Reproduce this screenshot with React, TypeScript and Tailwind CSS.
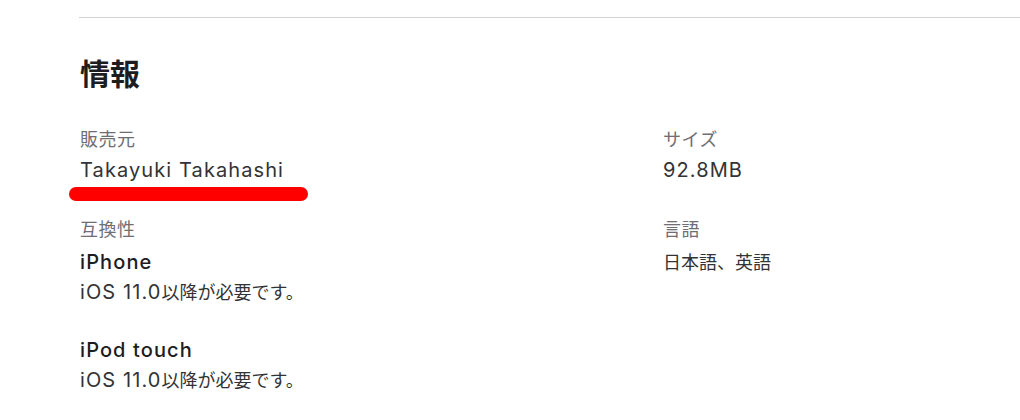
import type { ReactNode } from 'react';

const FONT = 'font-["Inter","Noto_Sans_CJK_JP",sans-serif]';

// Latin runs are set a little larger and wider than the Japanese around them
function L({ children }: { children: ReactNode }) {
  return <span className="text-[20px] tracking-[0.055em]">{children}</span>;
}

function J({ children }: { children: ReactNode }) {
  return <span className="text-[18px]">{children}</span>;
}

function Label({ children }: { children: ReactNode }) {
  return <dt className="text-[18px] leading-[24px] tracking-[0.03em] text-[#6e6e73]">{children}</dt>;
}

export default function App() {
  return (
    <div className={`${FONT} bg-white w-[1020px] h-[420px] overflow-hidden pt-[17px]`}>
      <section className="ml-[79px] border-t border-[#d2d2d7]">
        <h2 className="pl-px mt-[38px] text-[30px] leading-[36px] font-bold text-[#1d1d1f]">情報</h2>

        <div className="pl-px mt-[36px] grid grid-cols-[583px_1fr]">
          {/* left column */}
          <dl>
            <div className="relative">
              <Label>販売元</Label>
              <dd className="mt-[3px] text-[20px] leading-[30px] text-[#333336]">
                <L>Takayuki Takahashi</L>
              </dd>
              {/* red highlight */}
              <div className="absolute left-[-11px] top-[59px] h-[14px] w-[239px] rounded-full bg-[#ff0000]" />
            </div>

            <div className="mt-[33px]">
              <Label>互換性</Label>
              <dd className="mt-[5px] text-[20px] leading-[30px]">
                <div className="font-medium text-[#1d1d1f]">
                  <L>iPhone</L>
                </div>
                <div className="text-[#333336]">
                  <L>iOS 11.0</L>
                  <J>以降が必要です。</J>
                </div>
              </dd>
              <dd className="mt-[27px] text-[20px] leading-[30px]">
                <div className="font-medium text-[#1d1d1f]">
                  <L>iPod touch</L>
                </div>
                <div className="text-[#333336]">
                  <L>iOS 11.0</L>
                  <J>以降が必要です。</J>
                </div>
              </dd>
            </div>
          </dl>

          {/* right column */}
          <dl>
            <div>
              <Label>サイズ</Label>
              <dd className="mt-[3px] text-[20px] leading-[30px] text-[#333336]">
                <L>92.8MB</L>
              </dd>
            </div>
            <div className="mt-[33px]">
              <Label>言語</Label>
              <dd className="mt-[5px] text-[20px] leading-[30px] text-[#333336]">
                <J>日本語、英語</J>
              </dd>
            </div>
          </dl>
        </div>
      </section>
    </div>
  );
}
